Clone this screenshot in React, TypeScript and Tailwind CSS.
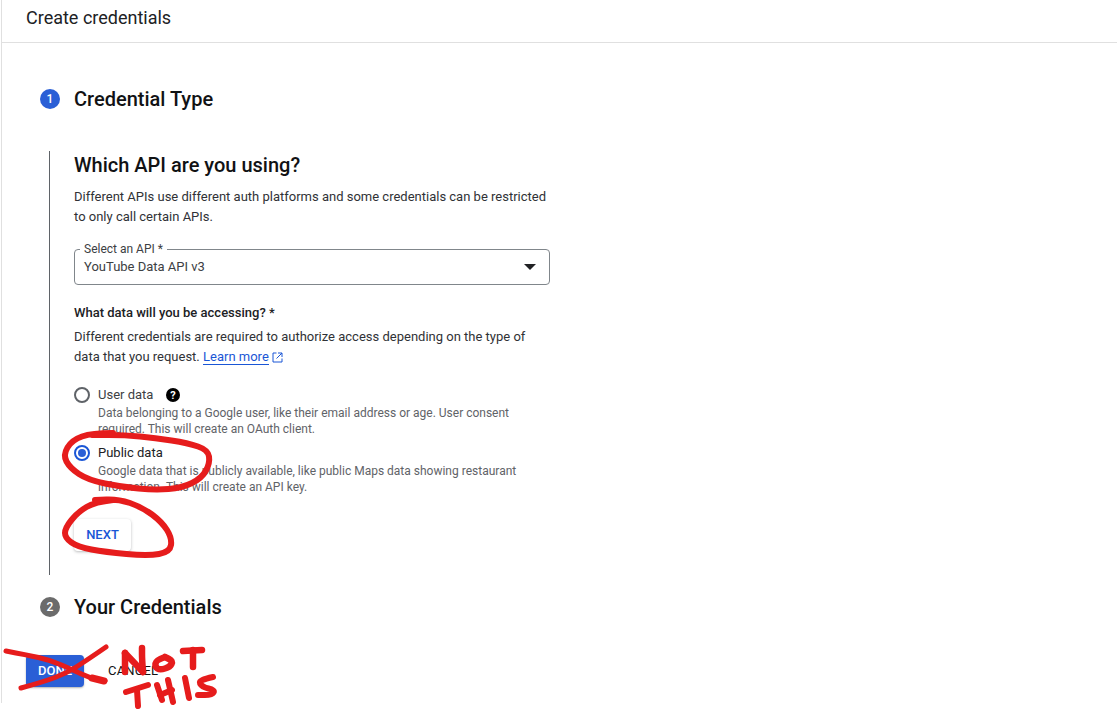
const font = { fontFamily: "Roboto, 'Liberation Sans', sans-serif" };

type P = [number, number];

function smooth(pts: P[]) {
  let d = `M${pts[0][0]} ${pts[0][1]}`;
  for (let i = 1; i < pts.length - 1; i++) {
    const mx = (pts[i][0] + pts[i + 1][0]) / 2;
    const my = (pts[i][1] + pts[i + 1][1]) / 2;
    d += ` Q${pts[i][0]} ${pts[i][1]} ${mx} ${my}`;
  }
  const last = pts[pts.length - 1];
  return `${d} L${last[0]} ${last[1]}`;
}

const strokes: { pts: P[]; w: number }[] = [
  { w: 6, pts: [[113, 433], [92, 433], [72, 440], [63, 455], [70, 468], [88, 480], [122, 487], [155, 490], [182, 488], [202, 478], [210, 463], [208, 450], [188, 443], [155, 438], [125, 435], [92, 435]] },
  { w: 6, pts: [[113, 500], [95, 502], [78, 512], [65, 528], [65, 538], [78, 547], [105, 552], [148, 556], [170, 552], [172, 538], [162, 522], [142, 507], [118, 499], [95, 500]] },
  { w: 5, pts: [[6, 651], [27, 655], [50, 660], [73, 670], [90, 678], [105, 681]] },
  { w: 7, pts: [[92, 678], [104, 681]] },
  { w: 5, pts: [[21, 688], [43, 682], [67, 673], [87, 660], [106, 647]] },
  { w: 6.5, pts: [[125, 672], [125, 653]] },
  { w: 6.5, pts: [[125, 653], [143, 672]] },
  { w: 6.5, pts: [[143, 672], [142, 660], [142, 648]] },
  { w: 6.5, pts: [[165, 657], [156, 660], [155, 667], [160, 670], [170, 667], [173, 661], [165, 657]] },
  { w: 6.5, pts: [[183, 651], [202, 650]] },
  { w: 6.5, pts: [[193, 650], [193, 667]] },
  { w: 6, pts: [[126, 692], [148, 685]] },
  { w: 6, pts: [[137, 690], [138, 706]] },
  { w: 6, pts: [[157, 685], [162, 700]] },
  { w: 6, pts: [[168, 680], [173, 702]] },
  { w: 6, pts: [[160, 695], [172, 690]] },
  { w: 6, pts: [[185, 678], [189, 698]] },
  { w: 6, pts: [[213, 677], [198, 680], [202, 687], [215, 690], [212, 695], [198, 695]] },
];

function Annotations() {
  return (
    <svg className="pointer-events-none absolute left-0 top-0" width="1117" height="710" viewBox="0 0 1117 710" fill="none">
      {strokes.map((s, i) => (
        <path key={i} d={smooth(s.pts)} stroke="#e61c1c" strokeWidth={s.w} strokeLinecap="round" strokeLinejoin="round" />
      ))}
    </svg>
  );
}

function Radio({ checked }: { checked?: boolean }) {
  return (
    <span className={`flex h-4 w-4 shrink-0 items-center justify-center rounded-full border-2 ${checked ? "border-[#1a56d6]" : "border-[#5f6368]"}`}>
      {checked && <span className="h-2 w-2 rounded-full bg-[#2a5fd6]" />}
    </span>
  );
}

export default function App() {
  return (
    <div className="relative h-[710px] w-[1117px] overflow-hidden bg-white text-[#202124]" style={font}>
      <div className="ml-px h-[703px] border-l border-[#e0e0e0]">
        <header className="flex h-[43px] items-center border-b border-[#e0e0e0] pb-[7px] pl-[24px] text-[18px]">
          Create credentials
        </header>

        <div className="pl-[38px] pt-[44px]">
          <div className="flex h-6 items-center gap-[14px]">
            <span className="flex h-5 w-5 items-center justify-center rounded-full bg-[#2a5fd6] text-[12px] font-medium text-white">1</span>
            <h2 className="text-[20px] font-medium leading-6 text-[#111214]">Credential Type</h2>
          </div>

          <div className="ml-[9px] mt-[40px] h-[424px] border-l border-[#5f6368] pl-[24px]">
            <h3 className="text-[20px] font-medium leading-7 text-[#111214]">Which API are you using?</h3>
            <p className="mt-[8px] w-[480px] text-[13px] leading-5 text-[#303236]">
              Different APIs use different auth platforms and some credentials can be restricted to only call certain APIs.
            </p>

            <div className="relative mt-[22px] flex h-9 w-[476px] items-center justify-between rounded border border-[#80868b] pl-[9px] pr-[13px]">
              <span className="absolute -top-[8px] left-[5px] bg-white px-[4px] text-[12px] leading-[14px] text-[#3c4043]">Select an API *</span>
              <span className="text-[13px] text-[#3c4043]">YouTube Data API v3</span>
              <span className="h-0 w-0 border-x-[6px] border-t-[6px] border-x-transparent border-t-[#202124]" />
            </div>

            <p className="mt-[18px] text-[13px] font-medium leading-5 text-[#202124]">What data will you be accessing? *</p>
            <p className="mt-[4px] w-[470px] text-[13px] leading-5 text-[#303236]">
              Different credentials are required to authorize access depending on the type of data that you request.{" "}
              <a className="border-b border-[#1a56d6] text-[#1a56d6]">Learn more</a>
              <svg className="ml-[3px] inline-block align-[-2px]" width="11" height="11" viewBox="0 0 11 11" fill="none" stroke="#1a56d6" strokeWidth="1">
                <path d="M4.5 1H1v9h9V6.5M6 1h4v4M10 1 4.5 6.5" />
              </svg>
            </p>

            <div className="mt-[18px] flex gap-[8px]">
              <span className="pt-[2px]"><Radio /></span>
              <div>
                <div className="flex h-5 items-center text-[13px] text-[#3c4043]">
                  User data
                  <svg className="ml-[13px]" width="14" height="14" viewBox="0 0 14 14">
                    <circle cx="7" cy="7" r="7" fill="#000000" />
                    <text x="7" y="10.8" textAnchor="middle" fontSize="11" fontWeight="700" fill="#fff">?</text>
                  </svg>
                </div>
                <p className="w-[430px] text-[12px] leading-4 text-[#5f6368]">
                  Data belonging to a Google user, like their email address or age. User consent required. This will create an OAuth client.
                </p>
              </div>
            </div>

            <div className="mt-[6px] flex gap-[8px]">
              <span className="pt-[2px]"><Radio checked /></span>
              <div>
                <div className="flex h-5 items-center text-[13px] text-[#202124]">Public data</div>
                <p className="w-[430px] text-[12px] leading-4 text-[#5f6368]">
                  Google data that is publicly available, like public Maps data showing restaurant information. This will create an API key.
                </p>
              </div>
            </div>

            <button className="mt-[24px] flex h-8 w-[57px] items-center justify-center rounded bg-white text-[13px] font-medium text-[#1a56d6] shadow-[0_1px_3px_rgba(60,64,67,0.35)]">
              NEXT
            </button>
          </div>

          <div className="mt-[20px] flex h-6 items-center gap-[14px]">
            <span className="flex h-5 w-5 items-center justify-center rounded-full bg-[#6b6b6b] text-[12px] font-medium text-white">2</span>
            <h2 className="text-[20px] font-medium leading-6 text-[#111214]">Your Credentials</h2>
          </div>
        </div>

        <div className="mt-[36px] flex items-center pl-[24px]">
          <button className="flex h-8 w-[58px] items-center justify-center rounded bg-[#2a5fd6] text-[13px] font-medium text-white shadow-[0_1px_2px_rgba(60,64,67,0.4)]">DONE</button>
          <button className="ml-[24px] text-[13px] tracking-[0.2px] text-[#111214]">CANCEL</button>
        </div>
      </div>
      <Annotations />
    </div>
  );
}
